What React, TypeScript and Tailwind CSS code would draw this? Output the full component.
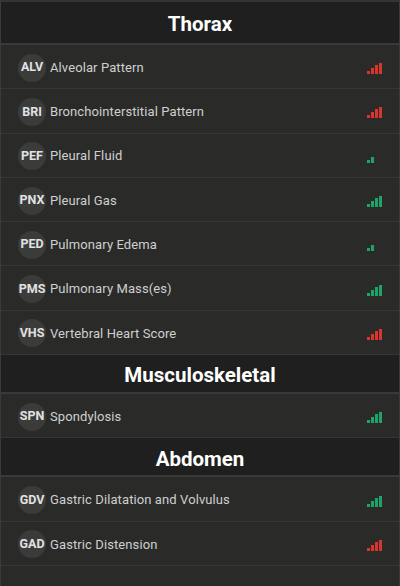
import React from 'react';

type Finding = { code: string; name: string; level: 2 | 4; tone: 'red' | 'green' };

const sections: { title: string; items: Finding[] }[] = [
  {
    title: 'Thorax',
    items: [
      { code: 'ALV', name: 'Alveolar Pattern', level: 4, tone: 'red' },
      { code: 'BRI', name: 'Bronchointerstitial Pattern', level: 4, tone: 'red' },
      { code: 'PEF', name: 'Pleural Fluid', level: 2, tone: 'green' },
      { code: 'PNX', name: 'Pleural Gas', level: 4, tone: 'green' },
      { code: 'PED', name: 'Pulmonary Edema', level: 2, tone: 'green' },
      { code: 'PMS', name: 'Pulmonary Mass(es)', level: 4, tone: 'green' },
      { code: 'VHS', name: 'Vertebral Heart Score', level: 4, tone: 'red' },
    ],
  },
  {
    title: 'Musculoskeletal',
    items: [{ code: 'SPN', name: 'Spondylosis', level: 4, tone: 'green' }],
  },
  {
    title: 'Abdomen',
    items: [
      { code: 'GDV', name: 'Gastric Dilatation and Volvulus', level: 4, tone: 'green' },
      { code: 'GAD', name: 'Gastric Distension', level: 4, tone: 'red' },
    ],
  },
];

const SignalBars: React.FC<{ level: number; tone: 'red' | 'green' }> = ({ level, tone }) => {
  const fill = tone === 'red' ? '#d8352c' : '#1fa468';
  const heights = [3, 6, 9, 11];
  return (
    <svg width="16" height="11" viewBox="0 0 16 11" className="mt-[2px]" shapeRendering="crispEdges">
      {heights.map((h, i) =>
        i < level ? <rect key={i} x={i * 4} y={11 - h} width="3" height={h} fill={fill} /> : null
      )}
    </svg>
  );
};

const Row: React.FC<{ item: Finding }> = ({ item }) => (
  <div className="flex h-[44.3px] items-center border-b border-[#363735] bg-[#2a2b29] pl-[17px] pr-[16px] pt-[2px]">
    <div className="flex h-7 w-7 shrink-0 items-center justify-center rounded-full bg-[#3b3c3a] text-[12.5px] font-bold text-[#e2e2e2]">
      {item.code}
    </div>
    <span className="ml-1 flex-1 text-[13px] tracking-[0.1px] text-[#cfcfcf]">{item.name}</span>
    <SignalBars level={item.level} tone={item.tone} />
  </div>
);

export default function App() {
  return (
    <div
      className="h-[586px] w-[400px] overflow-hidden border-x border-[#3a3b3a] border-t-2 border-t-[#30353a] bg-[#2a2b29]"
      style={{ fontFamily: 'Roboto, "Liberation Sans", sans-serif' }}
    >
      {sections.map((s, si) => (
        <div key={s.title}>
          <div
            className={`flex items-center justify-center border-b-2 border-[#393a38] bg-[#1e1f1e] pt-[4px] text-[20.5px] font-bold text-white ${
              si === 0 ? 'h-[43px]' : 'h-[39px]'
            }`}
          >
            {s.title}
          </div>
          {s.items.map((it) => (
            <Row key={it.code} item={it} />
          ))}
        </div>
      ))}
    </div>
  );
}
